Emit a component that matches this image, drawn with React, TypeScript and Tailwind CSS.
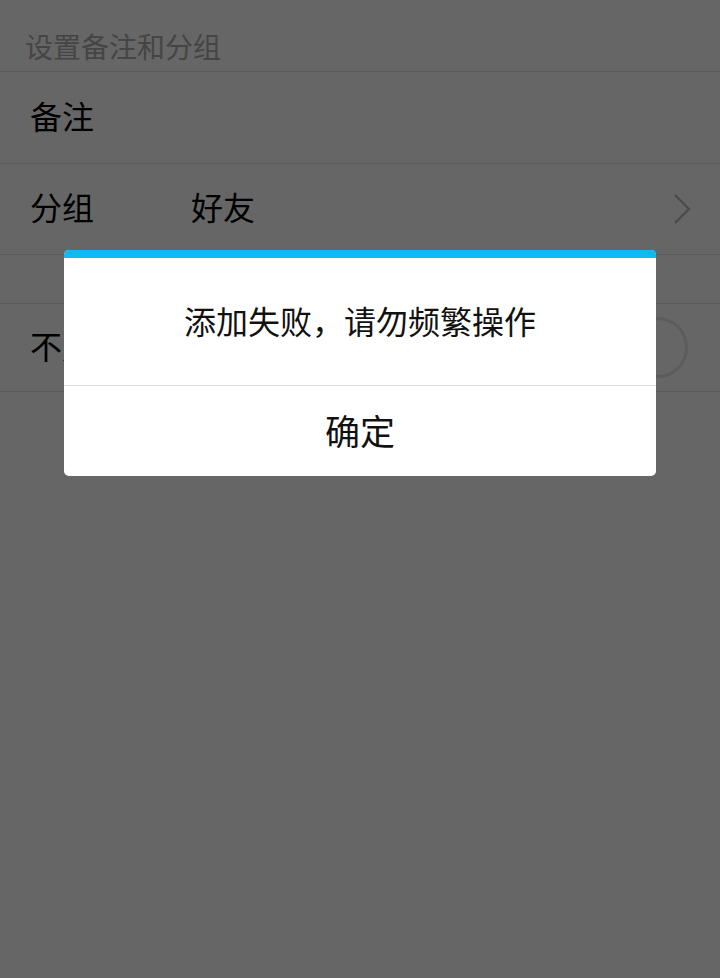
const cjk = { fontFamily: '"Noto Sans CJK SC", "Noto Sans", sans-serif' };

const Row = ({ children, className = "" }: { children: React.ReactNode; className?: string }) => (
  <div className={`flex items-center border-b border-[#5a5a5a] px-[30px] ${className}`}>{children}</div>
);

export default function App() {
  return (
    <div className="relative min-h-[978px] w-[720px] bg-[#666666]" style={cjk}>
      {/* dimmed settings page */}
      <div className="flex flex-col">
        <div className="flex h-[72px] items-end border-b border-[#5a5a5a] px-[25px] pb-[11px]">
          <span className="text-[28px] leading-none text-[#454545]">设置备注和分组</span>
        </div>
        <Row className="h-[92px]">
          <span className="pb-[6px] text-[32px] leading-none text-black">备注</span>
        </Row>
        <Row className="h-[91px]">
          <span className="w-[161px] pb-[6px] text-[32px] leading-none text-black">分组</span>
          <span className="pb-[6px] text-[32px] leading-none text-black">好友</span>
          <svg className="ml-auto mr-[-2px]" width="20" height="32" viewBox="0 0 20 32" fill="none">
            <path d="M3 2 L17 16 L3 30" stroke="#4a4a4a" strokeWidth="2.2" />
          </svg>
        </Row>
        <div className="h-[49px] border-b border-[#5a5a5a]" />
        <Row className="h-[88px]">
          <span className="pb-[6px] text-[32px] leading-none text-black">不允许</span>
          <div className="ml-auto mr-[2px] h-[61px] w-[61px] rounded-full border-[3px] border-[#5c5c5c]" />
        </Row>
      </div>

      {/* dialog */}
      <div className="absolute left-[64px] top-[250px] w-[592px] overflow-hidden rounded-[5px] bg-white">
        <div className="h-[8px] bg-[#12b7f5]" />
        <div className="flex h-[127px] items-center justify-center">
          <span className="pb-[4px] text-[32px] leading-none text-[#111]">添加失败，请勿频繁操作</span>
        </div>
        <div className="flex h-[91px] items-center justify-center border-t border-[#dedede]">
          <span className="pb-[4px] text-[35px] leading-none text-[#111]">确定</span>
        </div>
      </div>
    </div>
  );
}
